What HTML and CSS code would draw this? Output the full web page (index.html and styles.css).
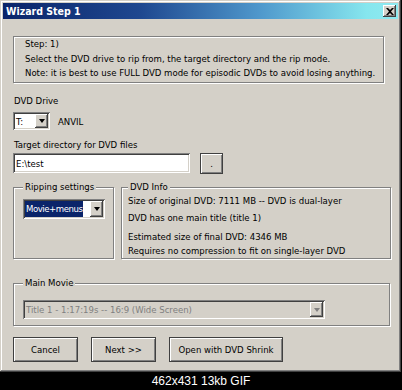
FILE: index.html
```html
<!DOCTYPE html>
<html lang="en">
<head>
    <meta charset="UTF-8">
    <title>Wizard Step 1</title>
    <link rel="stylesheet" href="styles.css">
</head>
<body>
    <div class="window">
        <div class="titlebar">
            <span class="title">Wizard Step 1</span>
            <span class="close-btn">
                <svg width="8" height="7" viewBox="0 0 8 7"><path d="M0 0h2l2 2 2-2h2L5 3.5 8 7H6L4 5 2 7H0l3-3.5z" fill="#000"/></svg>
            </span>
        </div>
        <div class="content">
            <div class="step-box">
                <p>Step: 1)</p>
                <p>Select the DVD drive to rip from, the target directory and the rip mode.</p>
                <p>Note: it is best to use FULL DVD mode for episodic DVDs to avoid losing anything.</p>
            </div>

            <div class="label drive-label">DVD Drive</div>
            <div class="drive-row">
                <div class="combo drive-combo">
                    <span class="combo-text">T:</span>
                    <span class="combo-btn"><span class="arrow"></span></span>
                </div>
                <span class="drive-name">ANVIL</span>
            </div>

            <div class="label target-label">Target directory for DVD files</div>
            <div class="target-row">
                <div class="textbox">E:\test</div>
                <div class="btn browse-btn">.</div>
            </div>

            <div class="group-row">
                <fieldset class="group rip-group">
                    <legend>Ripping settings</legend>
                    <div class="combo rip-combo">
                        <span class="combo-text"><span class="selected">Movie+menus</span></span>
                        <span class="combo-btn"><span class="arrow"></span></span>
                    </div>
                </fieldset>
                <fieldset class="group info-group">
                    <legend>DVD Info</legend>
                    <p class="info-size">Size of original DVD: 7111 MB -- DVD is dual-layer</p>
                    <p class="info-title">DVD has one main title (title 1)</p>
                    <p class="info-est">Estimated size of final DVD: 4346 MB</p>
                    <p class="info-req">Requires no compression to fit on single-layer DVD</p>
                </fieldset>
            </div>

            <fieldset class="group movie-group">
                <legend>Main Movie</legend>
                <div class="combo movie-combo disabled">
                    <span class="combo-text">Title 1 - 1:17:19s -- 16:9 (Wide Screen)</span>
                    <span class="combo-btn"><span class="arrow"></span></span>
                </div>
            </fieldset>

            <div class="button-row">
                <div class="btn cancel-btn">Cancel</div>
                <div class="btn next-btn">Next &gt;&gt;</div>
                <div class="btn shrink-btn">Open with DVD Shrink</div>
            </div>
        </div>
    </div>
    <div class="caption">462x431 13kb GIF</div>
</body>
</html>
```

FILE: styles.css
```css
:root {
    --face: #d4d0c8;
    --shadow: #808080;
    --dark: #404040;
    --light: #fff;
    --navy: #0a246a;
}

* {
    box-sizing: border-box;
    margin: 0;
    padding: 0;
}

body {
    background: #000;
    font-family: "DejaVu Sans Condensed", "DejaVu Sans", sans-serif;
    font-stretch: condensed;
    font-size: 9.5px;
    line-height: 13px;
    color: #000;
    width: 402px;
}

.window {
    width: 401px;
    height: 372px;
    background: var(--face);
    padding: 3px;
    box-shadow: inset -1px -1px var(--dark), inset 1px 1px var(--face),
                inset -2px -2px var(--shadow), inset 2px 2px var(--light);
}

.titlebar {
    height: 16px;
    display: flex;
    align-items: center;
    justify-content: space-between;
    padding: 0 2px 0 3px;
    background: linear-gradient(to right, var(--navy) 0%, #1f4890 35%, #4f98cc 65%, #86e6ee 92%, #8eeaf0 100%);
}

.title {
    color: #fff;
    font-weight: bold;
    font-size: 10.5px;
}

.close-btn {
    width: 13px;
    height: 12px;
    display: flex;
    align-items: center;
    justify-content: center;
    background: var(--face);
    box-shadow: inset -1px -1px var(--dark), inset 1px 1px var(--light),
                inset -2px -2px var(--shadow);
}

.content {
    padding: 17px 0 0 10px;
}

/* sunken static box */
.step-box {
    width: 371px;
    height: 47px;
    padding: 0 0 0 11px;
    line-height: 14.5px;
    border: 1px solid var(--shadow);
    box-shadow: inset 1px 1px var(--light), 1px 1px var(--light);
}

.label {
    margin-left: 1px;
}

.drive-label { margin-top: 11px; }

.drive-row {
    display: flex;
    align-items: center;
    margin-top: 5px;
    height: 18px;
}

.drive-name {
    margin-left: 8px;
}

.target-label { margin-top: 8px; }

.target-row {
    display: flex;
    margin-top: 2px;
}

.combo, .textbox {
    display: flex;
    align-items: center;
    background: #fff;
    padding: 2px;
    box-shadow: inset 1px 1px var(--shadow), inset -1px -1px var(--light),
                inset 2px 2px var(--dark), inset -2px -2px var(--face);
}

.combo-text {
    flex-grow: 1;
    padding-left: 1px;
    white-space: nowrap;
    overflow: hidden;
}

.combo-btn {
    width: 13px;
    flex-shrink: 0;
    align-self: stretch;
    display: flex;
    align-items: center;
    justify-content: center;
    background: var(--face);
    box-shadow: inset -1px -1px var(--dark), inset 1px 1px var(--light),
                inset -2px -2px var(--shadow);
}

.arrow {
    width: 0;
    height: 0;
    border-left: 3.5px solid transparent;
    border-right: 3.5px solid transparent;
    border-top: 4px solid #000;
}

.drive-combo {
    width: 37px;
    height: 18px;
}

.textbox {
    width: 177px;
    height: 20px;
    padding-left: 3px;
}

.btn {
    display: flex;
    align-items: center;
    justify-content: center;
    background: var(--face);
    border: 1px solid var(--dark);
    box-shadow: inset 1px 1px var(--light), inset -1px -1px var(--shadow);
}

.browse-btn {
    width: 23px;
    height: 21px;
    margin-left: 10px;
}

.group-row {
    display: flex;
    align-items: stretch;
    gap: 7px;
    margin-top: 7px;
}

.group {
    border: 1px solid var(--shadow);
    box-shadow: inset 1px 1px var(--light), 1px 1px var(--light);
    padding: 0 0 0 6px;
}

.group legend {
    padding: 0 2px;
    line-height: 12px;
    background: var(--face);
}

.rip-group {
    width: 101px;
    padding: 6px 0 0 9px;
}

.rip-combo {
    width: 82px;
    height: 20px;
}

.rip-combo .combo-text {
    padding-left: 0;
}

.selected {
    display: inline-block;
    background: var(--navy);
    color: #fff;
    padding: 1px 1px 2px;
    letter-spacing: -0.45px;
}

.info-group {
    width: 270px;
    padding: 1px 0 1px 6px;
}

.info-title { margin-top: 4px; }
.info-est { margin-top: 6px; }
.info-req { margin-top: 1px; }

.movie-group {
    width: 377px;
    margin-top: 18px;
    padding: 11px 0 6px 9px;
}

.movie-combo {
    width: 302px;
    height: 19px;
}

.disabled {
    background: var(--face);
    color: var(--shadow);
}

.disabled .arrow {
    border-top-color: var(--shadow);
}

.button-row {
    display: flex;
    gap: 13px;
    margin-top: 11px;
}

.button-row .btn {
    height: 25px;
}

.cancel-btn { width: 65px; }
.next-btn { width: 65px; }
.shrink-btn { width: 114px; }

.caption {
    height: 18px;
    background: #000;
    color: #fff;
    text-align: center;
    font-family: "Liberation Sans", Arial, sans-serif;
    font-stretch: normal;
    font-size: 12px;
    line-height: 18px;
}
```
